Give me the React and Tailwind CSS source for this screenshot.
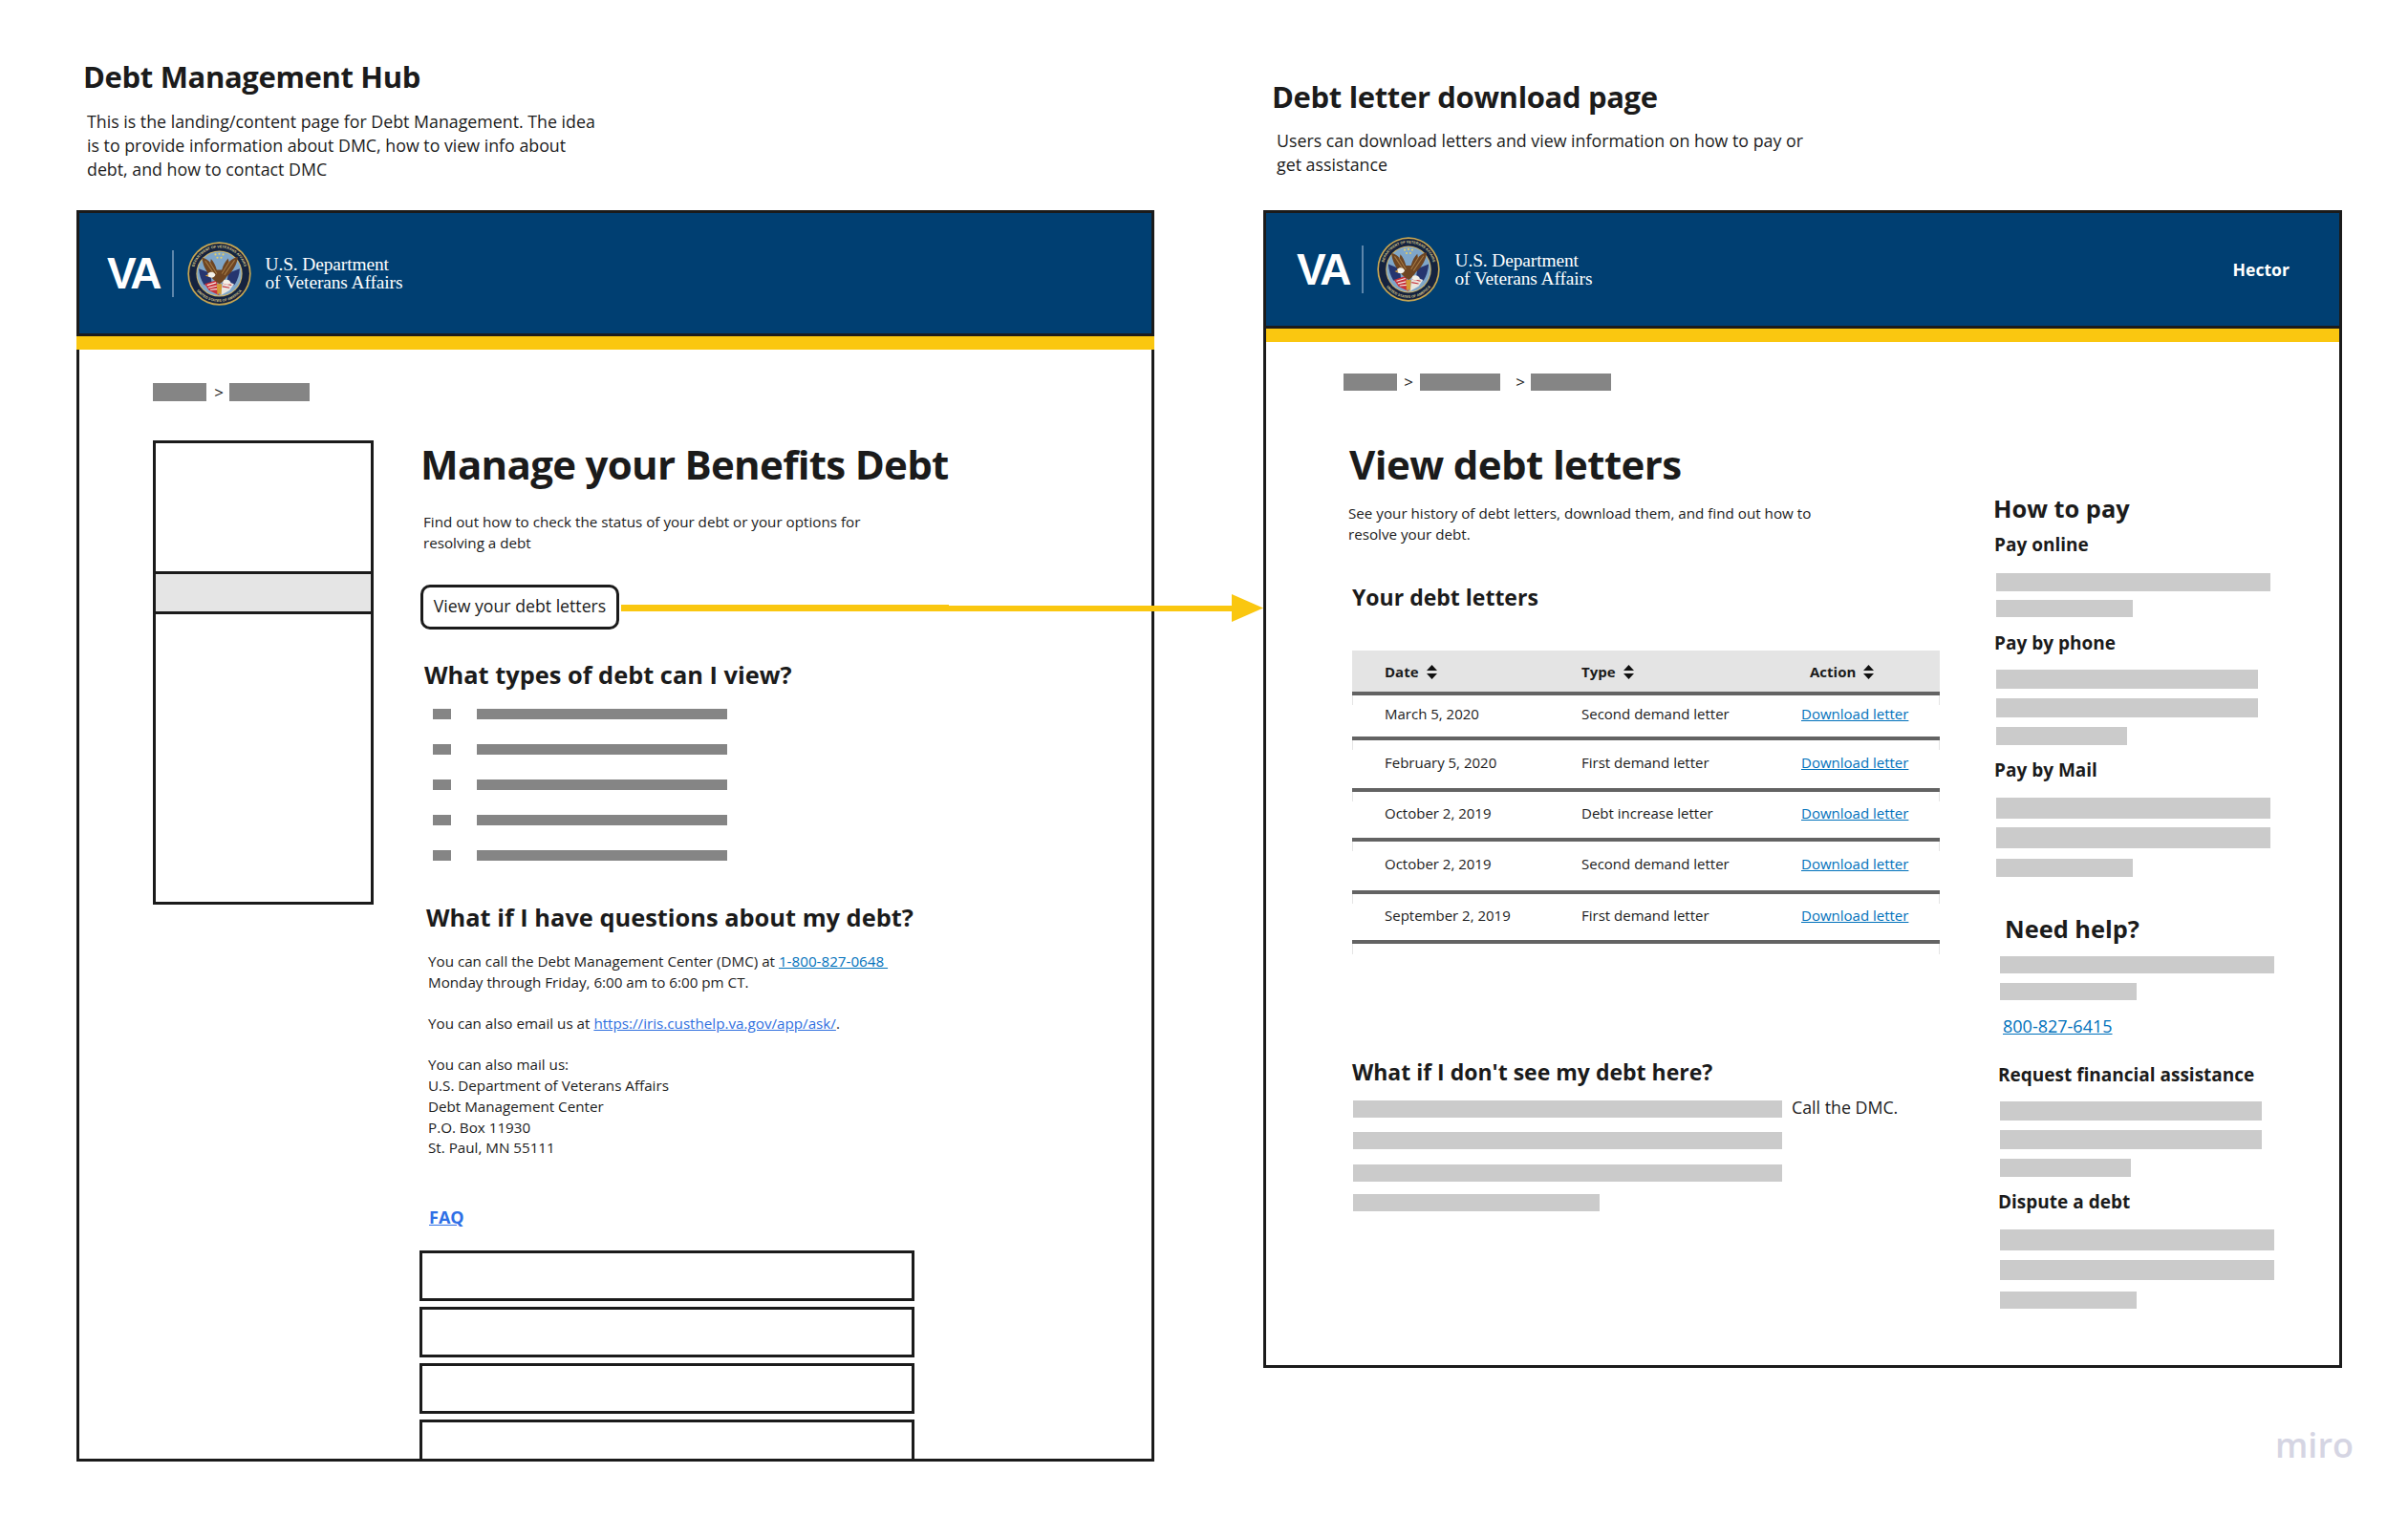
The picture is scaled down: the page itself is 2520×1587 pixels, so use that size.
import React from "react";

const Seal = ({ id, className }) => (
  <svg viewBox="0 0 100 100" className={className} preserveAspectRatio="none" aria-hidden="true">
    <defs>
      <path id={`${id}-top`} d="M 9.5 50 A 40.5 40.5 0 0 1 90.5 50" />
      <path id={`${id}-bot`} d="M 6 50 A 44 44 0 0 0 94 50" />
    </defs>
    <circle cx="50" cy="50" r="49.5" fill="#c7a652" />
    <circle cx="50" cy="50" r="47" fill="#15233f" />
    <circle cx="50" cy="50" r="36" fill="#d4b868" />
    <circle cx="50" cy="50" r="34.5" fill="#7fa6c9" />
    <text fontFamily="Liberation Sans, sans-serif" fontSize="5.6" fontWeight="700" fill="#d9c98d">
      <textPath href={`#${id}-top`} startOffset="50%" textAnchor="middle">DEPARTMENT OF VETERANS AFFAIRS</textPath>
    </text>
    <text fontFamily="Liberation Sans, sans-serif" fontSize="5.6" fontWeight="700" fill="#d9c98d">
      <textPath href={`#${id}-bot`} startOffset="50%" textAnchor="middle">UNITED STATES OF AMERICA</textPath>
    </text>
    <g fill="#e9cf62">
      <circle cx="44" cy="20" r="1.6" /><circle cx="50" cy="19" r="1.6" /><circle cx="56" cy="20" r="1.6" />
      <circle cx="47" cy="25" r="1.6" /><circle cx="53" cy="25" r="1.6" />
    </g>
    <path d="M18 42 L36 49 L39 70 L26 67 Q19 56 18 42Z" fill="#26356f" />
    <path d="M82 42 L64 49 L61 70 L74 67 Q81 56 82 42Z" fill="#26356f" />
    <path d="M27 66 L46 60 L50 84 L34 76Z" fill="#c8303a" />
    <path d="M31 68 L45 64 M33 72 L46 69 M36 75 L47 74" stroke="#f3efe6" strokeWidth="1.8" fill="none" />
    <path d="M73 66 L56 60 L52 84 L66 76Z" fill="#e9e6df" />
    <path d="M69 68 L56 65 M66 72 L55 70" stroke="#c8303a" strokeWidth="1.6" fill="none" />
    <path d="M23 25 C29 26 33 29 36 33 L37 27 C41 31 44 37 46 44 L54 44 C56 36 60 30 64 26 L65 32 C69 28 73 25 79 24 C78 34 72 46 62 54 C58 60 54 64 50 66 C44 62 38 58 35 52 C29 46 24 36 23 25Z" fill="#6e4522" />
    <path d="M28 30 L43 52 M35 32 L46 50 M74 29 L58 52 M66 31 L54 50" stroke="#a37a45" strokeWidth="1.6" fill="none" />
    <path d="M32 50 C36 46 42 47 44 52 C42 57 37 57 33 55Z" fill="#f4f1e8" />
    <path d="M33 51 L28 53 L33 55Z" fill="#d9a23a" />
    <path d="M57 60 C62 58 67 60 68 64 C64 68 59 67 56 65Z" fill="#f4f1e8" />
    <path d="M46 66 L54 66 L53 84 L50 80 L47 84Z" fill="#d39a34" />
  </svg>
);

const VaLogo = ({ id, wordClass, dividerClass, sealClass, textClass }) => (
  <div className="flex items-center">
    <span className={`font-['Liberation_Sans',sans-serif] font-bold text-white leading-none tracking-[-3px] ${wordClass}`}>VA</span>
    <span className={`w-[2px] bg-[#5d86ab] ${dividerClass}`} />
    <Seal id={id} className={sealClass} />
    <div className={`font-['Liberation_Serif',serif] text-white text-[19.4px] leading-[19px] tracking-[-0.1px] whitespace-nowrap ${textClass}`}>
      <div>U.S. Department</div>
      <div>of Veterans Affairs</div>
    </div>
  </div>
);

const Bar = ({ className }) => <div className={`bg-[#cbcbcb] ${className}`} />;

const DarkBar = ({ className }) => <div className={`bg-[#858585] ${className}`} />;

const ListRow = () => (
  <div className="flex">
    <DarkBar className="ml-[13px] w-[19px] h-[11px]" />
    <DarkBar className="ml-[27px] w-[262px] h-[11px]" />
  </div>
);

const Sort = () => (
  <svg viewBox="0 0 11 15" className="w-[11px] h-[15px] ml-[8px]" aria-hidden="true">
    <path d="M5.5 0 L11 6 H0Z M0 9 H11 L5.5 15Z" fill="#111" />
  </svg>
);

const Tick = () => (
  <>
    <span className="absolute left-0 top-0 h-[10px] w-px bg-[#e4e4e4]" />
    <span className="absolute right-0 top-0 h-[10px] w-px bg-[#e4e4e4]" />
  </>
);

const Row = ({ date, type, h }) => (
  <div className={`relative grid grid-cols-[206px_230px_1fr] items-center pl-[34px] pb-[4px] border-b-[4px] border-[#636363] text-[15px] text-[#1b1b1b] ${h}`}>
    <Tick />
    <span>{date}</span>
    <span>{type}</span>
    <a className="text-[#0071bb] underline">Download letter</a>
  </div>
);

export default function App() {
  return (
    <div className="relative w-[2520px] h-[1587px] overflow-hidden bg-white font-['Open_Sans',sans-serif] text-[#1b1b1b] flex pl-[80px]">
      {/* Left board */}
      <div className="w-[1128px]">
        <div className="h-[220px] pt-[58px]">
          <h2 className="ml-[7px] text-[31px] leading-[44px] font-bold tracking-[-0.35px]">Debt Management Hub</h2>
          <p className="ml-[11px] mt-[13px] text-[17.8px] leading-[25px] w-[545px]">
            This is the landing/content page for Debt Management. The idea is to provide information about DMC, how to view info about debt, and how to contact DMC
          </p>
        </div>
        <div className="h-[1310px] border-[3px] border-[#1b1b1b] flex flex-col">
          <div className="h-[129px] bg-[#003f72] border-b-[3px] border-[#1b1b1b] pl-[29px] pt-[30px]">
            <VaLogo id="s1" wordClass="text-[46px] pb-[2px]" dividerClass="ml-[13px] h-[49px]" sealClass="ml-[14px] w-[67px] h-[67px]" textClass="ml-[15px] pb-[2px]" />
          </div>
          <div className="h-[14px] bg-[#fac710] -mx-[3px]" />
          <div className="pl-[77px] pt-[35px]">
            <div className="flex items-center">
              <DarkBar className="w-[56px] h-[19px]" />
              <span className="w-[24px] pl-[2px] text-center text-[17px] leading-[19px]">&gt;</span>
              <DarkBar className="w-[84px] h-[19px]" />
            </div>
            <div className="flex mt-[41px]">
              <div className="w-[231px] h-[486px] border-[3px] border-[#1b1b1b]">
                <div className="mt-[134px] h-[45px] bg-[#e5e5e5] border-y-[3px] border-[#1b1b1b]" />
              </div>
              <div className="ml-[49px]">
                <h1 className="-mt-[2px] text-[42px] leading-[54px] font-bold whitespace-nowrap tracking-[-0.7px]">Manage your Benefits Debt</h1>
                <p className="ml-[3px] mt-[22px] text-[15.2px] leading-[22px] w-[480px]">
                  Find out how to check the status of your debt or your options for resolving a debt
                </p>
                <div className="mt-[33px] w-[208px] h-[47px] pb-[3px] border-[3px] border-[#1b1b1b] rounded-[10px] flex items-center justify-center text-[17.7px] whitespace-nowrap">
                  View your debt letters
                </div>
                <h2 className="ml-[4px] mt-[29px] text-[25.4px] leading-[36px] font-bold whitespace-nowrap">What types of debt can I view?</h2>
                <div className="mt-[18px] flex flex-col gap-[26px]">
                  <ListRow /><ListRow /><ListRow /><ListRow /><ListRow />
                </div>
                <h2 className="ml-[6px] mt-[41px] text-[25.4px] leading-[36px] font-bold whitespace-nowrap">What if I have questions about my debt?</h2>
                <div className="ml-[8px] mt-[18px] text-[15.2px] leading-[21.7px] whitespace-nowrap">
                  <div>You can call the Debt Management Center (DMC) at <a className="text-[#0071bb] underline whitespace-pre">1-800-827-0648 </a></div>
                  <div>Monday through Friday, 6:00 am to 6:00 pm CT.</div>
                  <div className="h-[21.7px]" />
                  <div>You can also email us at <a className="text-[#2f6fdf] underline">https://iris.custhelp.va.gov/app/ask/</a>.</div>
                  <div className="h-[21.7px]" />
                  <div>You can also mail us:</div>
                  <div>U.S. Department of Veterans Affairs</div>
                  <div>Debt Management Center</div>
                  <div>P.O. Box 11930</div>
                  <div>St. Paul, MN 55111</div>
                </div>
                <a className="block ml-[9px] mt-[49px] text-[18px] leading-[24px] font-bold text-[#2f6fe6] underline">FAQ</a>
                <div className="mt-[23px] -ml-[1px] w-[518px] flex flex-col gap-[6px]">
                  <div className="h-[53px] border-[3px] border-[#1b1b1b]" />
                  <div className="h-[53px] border-[3px] border-[#1b1b1b]" />
                  <div className="h-[53px] border-[3px] border-[#1b1b1b]" />
                  <div className="h-[41px] border-[3px] border-b-0 border-[#1b1b1b]" />
                </div>
              </div>
            </div>
          </div>
        </div>
      </div>

      {/* Right board */}
      <div className="ml-[114px] w-[1129px]">
        <div className="h-[220px] pt-[79px]">
          <h2 className="ml-[9px] text-[31px] leading-[44px] font-bold tracking-[-0.35px]">Debt letter download page</h2>
          <p className="ml-[14px] mt-[12px] text-[17.8px] leading-[25px] w-[570px]">
            Users can download letters and view information on how to pay or get assistance
          </p>
        </div>
        <div className="h-[1212px] border-[3px] border-[#1b1b1b]">
          <div className="h-[121px] bg-[#003f72] border-b-[3px] border-[#1b1b1b] pl-[32px] pr-[52px] pt-[25px] flex justify-between items-start">
            <VaLogo id="s2" wordClass="text-[46px]" dividerClass="ml-[13px] h-[50px]" sealClass="ml-[14px] w-[66px] h-[68px]" textClass="ml-[16px]" />
            <span className="text-white font-bold text-[17.6px] leading-[24px] mt-[22px]">Hector</span>
          </div>
          <div className="h-[14px] bg-[#fac710]" />
          <div className="pl-[81px] pt-[33px]">
            <div className="flex items-center">
              <DarkBar className="w-[56px] h-[18px]" />
              <span className="w-[24px] text-center text-[17px] leading-[18px]">&gt;</span>
              <DarkBar className="w-[84px] h-[18px]" />
              <span className="w-[32px] pl-[10px] text-center text-[17px] leading-[18px]">&gt;</span>
              <DarkBar className="w-[84px] h-[18px]" />
            </div>
            <div className="flex mt-[51px]">
              <div className="w-[680px]">
                <h1 className="ml-[6px] -mt-[1px] text-[42px] leading-[54px] font-bold whitespace-nowrap tracking-[-0.6px]">View debt letters</h1>
                <p className="ml-[5px] mt-[13px] text-[15.2px] leading-[22px] w-[500px]">
                  See your history of debt letters, download them, and find out how to resolve your debt.
                </p>
                <h2 className="ml-[9px] mt-[39px] text-[23px] leading-[32px] font-bold whitespace-nowrap">Your debt letters</h2>
                <div className="ml-[9px] mt-[40px] w-[615px]">
                  <div className="grid grid-cols-[206px_239px_1fr] items-center h-[47px] pl-[34px] pt-[2px] bg-[#e4e4e4] border-b-[4px] border-[#636363] text-[15px] font-bold">
                    <span className="flex items-center">Date<Sort /></span>
                    <span className="flex items-center">Type<Sort /></span>
                    <span className="flex items-center">Action<Sort /></span>
                  </div>
                  <Row date="March 5, 2020" type="Second demand letter" h="h-[47px]" />
                  <Row date="February 5, 2020" type="First demand letter" h="h-[54px]" />
                  <Row date="October 2, 2019" type="Debt increase letter" h="h-[52px]" />
                  <Row date="October 2, 2019" type="Second demand letter" h="h-[55px]" />
                  <Row date="September 2, 2019" type="First demand letter" h="h-[52px]" />
                  <div className="h-[11px] border-x border-[#e4e4e4]" />
                </div>
                <h2 className="ml-[9px] mt-[107px] text-[23px] leading-[32px] font-bold whitespace-nowrap">What if I don't see my debt here?</h2>
                <div className="ml-[10px] mt-[12px]">
                  <div className="flex items-center">
                    <Bar className="w-[449px] h-[18px]" />
                    <span className="ml-[10px] pb-[3px] text-[17.8px] leading-[18px] whitespace-nowrap">Call the DMC.</span>
                  </div>
                  <Bar className="mt-[14px] w-[449px] h-[18px]" />
                  <Bar className="mt-[16px] w-[449px] h-[18px]" />
                  <Bar className="mt-[13px] w-[258px] h-[18px]" />
                </div>
              </div>
              <div className="pt-[56px] whitespace-nowrap">
                <h2 className="text-[25.4px] leading-[32px] font-bold">How to pay</h2>
                <h3 className="ml-[1px] mt-[9px] text-[19px] leading-[26px] font-bold">Pay online</h3>
                <div className="ml-[3px]">
                  <Bar className="mt-[17px] w-[287px] h-[19px]" />
                  <Bar className="mt-[9px] w-[143px] h-[18px]" />
                </div>
                <h3 className="ml-[1px] mt-[14px] text-[19px] leading-[26px] font-bold">Pay by phone</h3>
                <div className="ml-[3px]">
                  <Bar className="mt-[15px] w-[274px] h-[20px]" />
                  <Bar className="mt-[10px] w-[274px] h-[20px]" />
                  <Bar className="mt-[10px] w-[137px] h-[19px]" />
                </div>
                <h3 className="ml-[1px] mt-[13px] text-[19px] leading-[26px] font-bold">Pay by Mail</h3>
                <div className="ml-[3px]">
                  <Bar className="mt-[16px] w-[287px] h-[22px]" />
                  <Bar className="mt-[9px] w-[287px] h-[22px]" />
                  <Bar className="mt-[11px] w-[143px] h-[19px]" />
                </div>
                <h2 className="ml-[12px] mt-[38px] text-[25.4px] leading-[32px] font-bold">Need help?</h2>
                <div className="ml-[7px]">
                  <Bar className="mt-[13px] w-[287px] h-[18px]" />
                  <Bar className="mt-[10px] w-[143px] h-[18px]" />
                </div>
                <a className="block ml-[10px] mt-[15px] text-[18px] leading-[24px] text-[#0071bb] underline">800-827-6415</a>
                <h3 className="ml-[5px] mt-[26px] text-[19px] leading-[26px] font-bold">Request financial assistance</h3>
                <div className="ml-[7px]">
                  <Bar className="mt-[15px] w-[274px] h-[20px]" />
                  <Bar className="mt-[10px] w-[274px] h-[20px]" />
                  <Bar className="mt-[10px] w-[137px] h-[19px]" />
                </div>
                <h3 className="ml-[5px] mt-[13px] text-[19px] leading-[26px] font-bold">Dispute a debt</h3>
                <div className="ml-[7px]">
                  <Bar className="mt-[16px] w-[287px] h-[22px]" />
                  <Bar className="mt-[10px] w-[287px] h-[21px]" />
                  <Bar className="mt-[12px] w-[143px] h-[18px]" />
                </div>
              </div>
            </div>
          </div>
        </div>
      </div>

      {/* Connector arrow lying over both boards */}
      <svg className="absolute left-[648px] top-[618px] w-[676px] h-[36px]" viewBox="0 0 676 36" aria-hidden="true">
        <path d="M2 15 H345 V16 H642 V22 H2Z" fill="#fac710" />
        <path d="M641 4 L674 18.5 L641 33Z" fill="#fac710" />
      </svg>

      {/* Watermark */}
      <div className="absolute left-[2381px] top-[1488px] font-['Open_Sans',sans-serif] font-semibold text-[36px] leading-[50px] text-[#d5d5e3]">miro</div>
    </div>
  );
}
